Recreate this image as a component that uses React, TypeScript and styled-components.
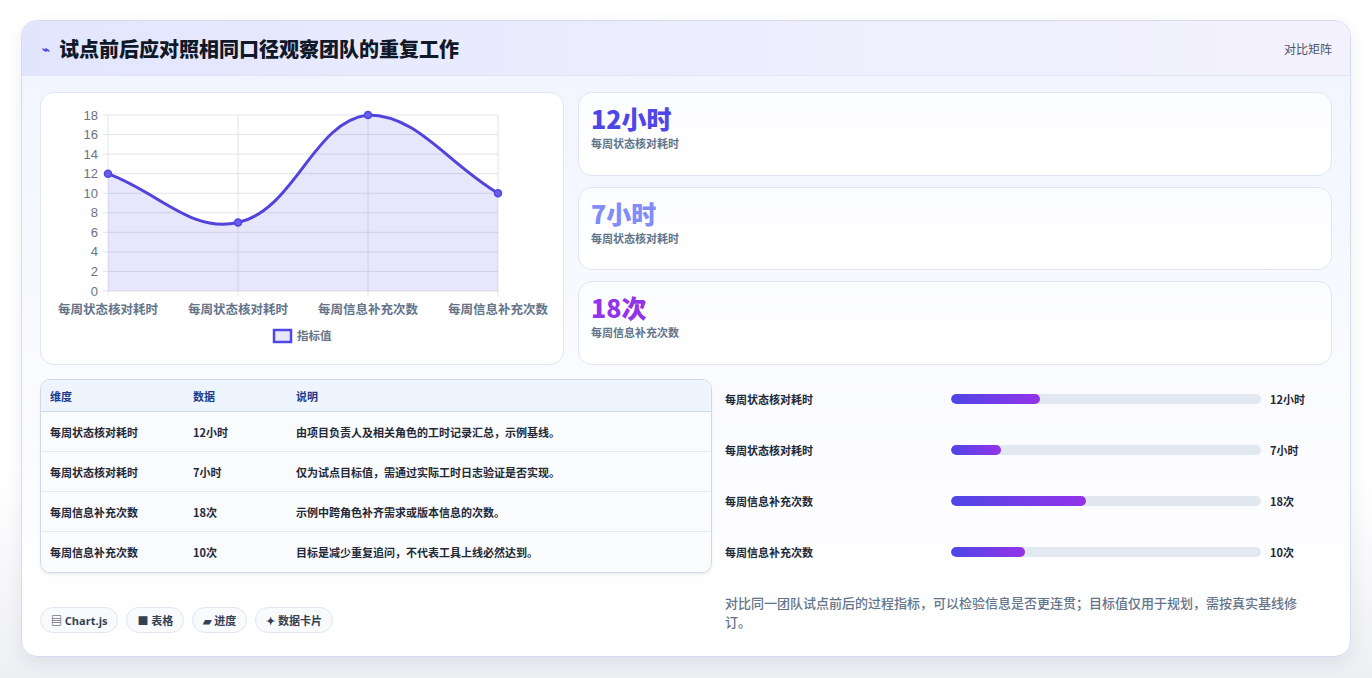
import React from "react";
import styled, { createGlobalStyle } from "styled-components";

const G = createGlobalStyle`
  html,body{margin:0;padding:0;background:#f4f5f9;}
  body{font-family:"Inter","Noto Sans CJK SC",sans-serif;}
`;
const Page = styled.div`
  padding:20px 20px 20px 21px;background:linear-gradient(#fff 0,#fff 70%,#eeeff3 100%);height:678px;box-sizing:border-box;
`;
const Card = styled.div`
  width:1330px;height:637px;box-sizing:border-box;border:1px solid #d6dbf2;border-radius:16px;overflow:hidden;
  background:linear-gradient(180deg,#f1f4fe 0%,#f9faff 50%,#ffffff 100%);box-shadow:0 6px 18px rgba(30,41,90,.08);
  display:flex;flex-direction:column;
`;
const Header = styled.div`
  height:54px;flex:none;display:flex;align-items:center;justify-content:space-between;padding:0 20px;
  background:linear-gradient(90deg,#e2e6fd,#eeeefd 60%,#f3f1fd);border-bottom:1px solid #e0e4f6;
`;
const Title = styled.h1`
  margin:0;font-size:20px;font-weight:800;color:#111827;display:flex;align-items:center;gap:9px;
  font-family:"Noto Sans CJK SC",sans-serif;
`;
const Bolt = styled.span`color:#4f46e5;font-size:13px;`;
const HeadRight = styled.span`font-size:12px;color:#475569;font-family:"Noto Sans CJK SC",sans-serif;margin-right:-2px;`;
const Body = styled.div`padding:16px 18px 0 18px;display:flex;flex-direction:column;`;
const TopRow = styled.div`display:flex;gap:14px;height:273px;`;
const ChartBox = styled.div`
  width:524px;flex:none;box-sizing:border-box;border:1px solid #e1e6f3;border-radius:14px;background:#fff;
`;
const Kpis = styled.div`flex:1;display:flex;flex-direction:column;gap:11px;`;
const Kpi = styled.div`
  flex:1;box-sizing:border-box;border:1px solid #dfe5f3;border-radius:14px;background:linear-gradient(#fbfcff,#fff);
  padding:8px 12px;font-family:"Noto Sans CJK SC",sans-serif;
`;
const KVal = styled.div<{ c: string }>`font-size:25px;font-weight:900;color:${p => p.c};line-height:34px;`;
const KLab = styled.div`font-size:11px;font-weight:600;color:#64748b;`;
const BottomRow = styled.div`display:flex;gap:13px;margin-top:14px;`;
const Left = styled.div`width:672px;flex:none;display:flex;flex-direction:column;`;
const Table = styled.table`
  width:100%;border-collapse:separate;border-spacing:0;border:1px solid #cfd8e6;border-radius:10px;overflow:hidden;
  font-family:"Noto Sans CJK SC",sans-serif;font-size:11px;box-shadow:0 2px 3px rgba(0,0,0,.06);
  th{background:#eef5ff;color:#1e3a8a;font-weight:700;text-align:left;height:32px;padding:0 9px;border-bottom:1px solid #cfd8e6;box-sizing:border-box;}
  td{background:#f9fbfd;color:#1f2937;font-weight:600;height:40px;padding:0 9px;border-bottom:1px solid #e2e8f0;box-sizing:border-box;}
  tr:last-child td{border-bottom:none;}
`;
const Chips = styled.div`display:flex;gap:8px;margin-top:34px;`;
const Chip = styled.span`
  height:26px;box-sizing:border-box;padding:0 10px;display:inline-flex;align-items:center;gap:4px;border:1px solid #e2e6f0;
  border-radius:999px;background:#f8fafc;font-size:11px;font-weight:700;color:#334155;font-family:"Open Sans","Noto Sans CJK SC",sans-serif;
`;
const Right = styled.div`flex:1;display:flex;flex-direction:column;padding-right:12px;margin-top:-6px;`;
const BarRow = styled.div`display:flex;align-items:center;height:51px;font-family:"Noto Sans CJK SC",sans-serif;font-size:11px;font-weight:700;color:#1f2937;`;
const BarLab = styled.div`width:226px;flex:none;`;
const Track = styled.div`width:310px;flex:none;height:10px;border-radius:5px;background:#e2e8f0;overflow:hidden;`;
const Fill = styled.div`height:100%;border-radius:5px;background:linear-gradient(90deg,#4f46e5,#9333ea);`;
const BarVal = styled.div`margin-left:9px;`;
const Note = styled.p`margin:16px 0 0;font-size:13px;color:#64748b;font-weight:500;font-family:"Noto Sans CJK SC",sans-serif;`;

const vals = [12, 7, 18, 10];
const xl = ["每周状态核对耗时", "每周状态核对耗时", "每周信息补充次数", "每周信息补充次数"];
const L = 67, R = 457, T = 22, B = 198;
const pts = vals.map((v, i) => ({ x: L + i * (R - L) / 3, y: B - v / 18 * (B - T) }));
function path() {
  const t = 0.4;
  const cps = pts.map((c, i) => {
    const p = pts[i - 1] || c, n = pts[i + 1] || c;
    const d01 = Math.hypot(c.x - p.x, c.y - p.y), d12 = Math.hypot(n.x - c.x, n.y - c.y);
    const s = d01 + d12 || 1;
    const fa = t * d01 / s, fb = t * d12 / s;
    const cl = (y: number) => Math.max(T, Math.min(B, y));
    return { px: c.x - fa * (n.x - p.x), py: cl(c.y - fa * (n.y - p.y)), nx: c.x + fb * (n.x - p.x), ny: cl(c.y + fb * (n.y - p.y)) };
  });
  let d = `M${pts[0].x},${pts[0].y}`;
  for (let i = 1; i < pts.length; i++) d += ` C${cps[i - 1].nx},${cps[i - 1].ny} ${cps[i].px},${cps[i].py} ${pts[i].x},${pts[i].y}`;
  return d;
}
const line = path();

function Chart() {
  return (
    <svg width="522" height="271" viewBox="0 0 522 271">
      {Array.from({ length: 10 }, (_, i) => {
        const y = B - i * (B - T) / 9;
        return <g key={i}>
          <line x1={L - 5} x2={R} y1={y} y2={y} stroke="#e2e4ea" />
          <text x={L - 10} y={y + 4.5} textAnchor="end" fontSize="13" fill="#6b7280" fontFamily="Liberation Sans">{i * 2}</text>
        </g>;
      })}
      {pts.map((p, i) => <line key={i} x1={p.x} x2={p.x} y1={T} y2={B + 5} stroke="#e2e4ea" />)}
      <path d={`${line} L${R},${B} L${L},${B} Z`} fill="rgba(99,88,220,.15)" />
      <path d={line} fill="none" stroke="#5143dc" strokeWidth="3" />
      {pts.map((p, i) => <circle key={i} cx={p.x} cy={p.y} r="3.5" fill="#6a5ee6" stroke="#4f46e5" strokeWidth="1.5" />)}
      {pts.map((p, i) => <text key={i} x={p.x} y={221} textAnchor="middle" fontSize="12.5" fontWeight="600" fill="#64748b" fontFamily="Noto Sans CJK SC">{xl[i]}</text>)}
      <rect x="233" y="237" width="17" height="12" fill="rgba(99,88,220,.15)" stroke="#4f46e5" strokeWidth="2.5" />
      <text x="256" y="247" fontSize="11.5" fontWeight="600" fill="#64748b" fontFamily="Noto Sans CJK SC">指标值</text>
    </svg>
  );
}

const rows = [
  ["每周状态核对耗时", "12小时", "由项目负责人及相关角色的工时记录汇总，示例基线。"],
  ["每周状态核对耗时", "7小时", "仅为试点目标值，需通过实际工时日志验证是否实现。"],
  ["每周信息补充次数", "18次", "示例中跨角色补齐需求或版本信息的次数。"],
  ["每周信息补充次数", "10次", "目标是减少重复追问，不代表工具上线必然达到。"],
];
const bars = [28.7, 16.1, 43.5, 23.9];

export default function App() {
  return (
    <Page>
      <G />
      <Card>
        <Header>
          <Title><Bolt>⌁</Bolt>试点前后应对照相同口径观察团队的重复工作</Title>
          <HeadRight>对比矩阵</HeadRight>
        </Header>
        <Body>
          <TopRow>
            <ChartBox><Chart /></ChartBox>
            <Kpis>
              <Kpi><KVal c="#4f46e5">12小时</KVal><KLab>每周状态核对耗时</KLab></Kpi>
              <Kpi><KVal c="#818cf8">7小时</KVal><KLab>每周状态核对耗时</KLab></Kpi>
              <Kpi><KVal c="#9333ea">18次</KVal><KLab>每周信息补充次数</KLab></Kpi>
            </Kpis>
          </TopRow>
          <BottomRow>
            <Left>
              <Table>
                <thead><tr><th style={{ width: 143 }}>维度</th><th style={{ width: 103 }}>数据</th><th>说明</th></tr></thead>
                <tbody>{rows.map((r, i) => <tr key={i}>{r.map((c, j) => <td key={j}>{c}</td>)}</tr>)}</tbody>
              </Table>
              <Chips>
                <Chip>▤ Chart.js</Chip><Chip>■ 表格</Chip><Chip>▰ 进度</Chip><Chip>✦ 数据卡片</Chip>
              </Chips>
            </Left>
            <Right>
              {rows.map((r, i) => (
                <BarRow key={i}>
                  <BarLab>{r[0]}</BarLab>
                  <Track><Fill style={{ width: `${bars[i]}%` }} /></Track>
                  <BarVal>{r[1]}</BarVal>
                </BarRow>
              ))}
              <Note>对比同一团队试点前后的过程指标，可以检验信息是否更连贯；目标值仅用于规划，需按真实基线修订。</Note>
            </Right>
          </BottomRow>
        </Body>
      </Card>
    </Page>
  );
}
